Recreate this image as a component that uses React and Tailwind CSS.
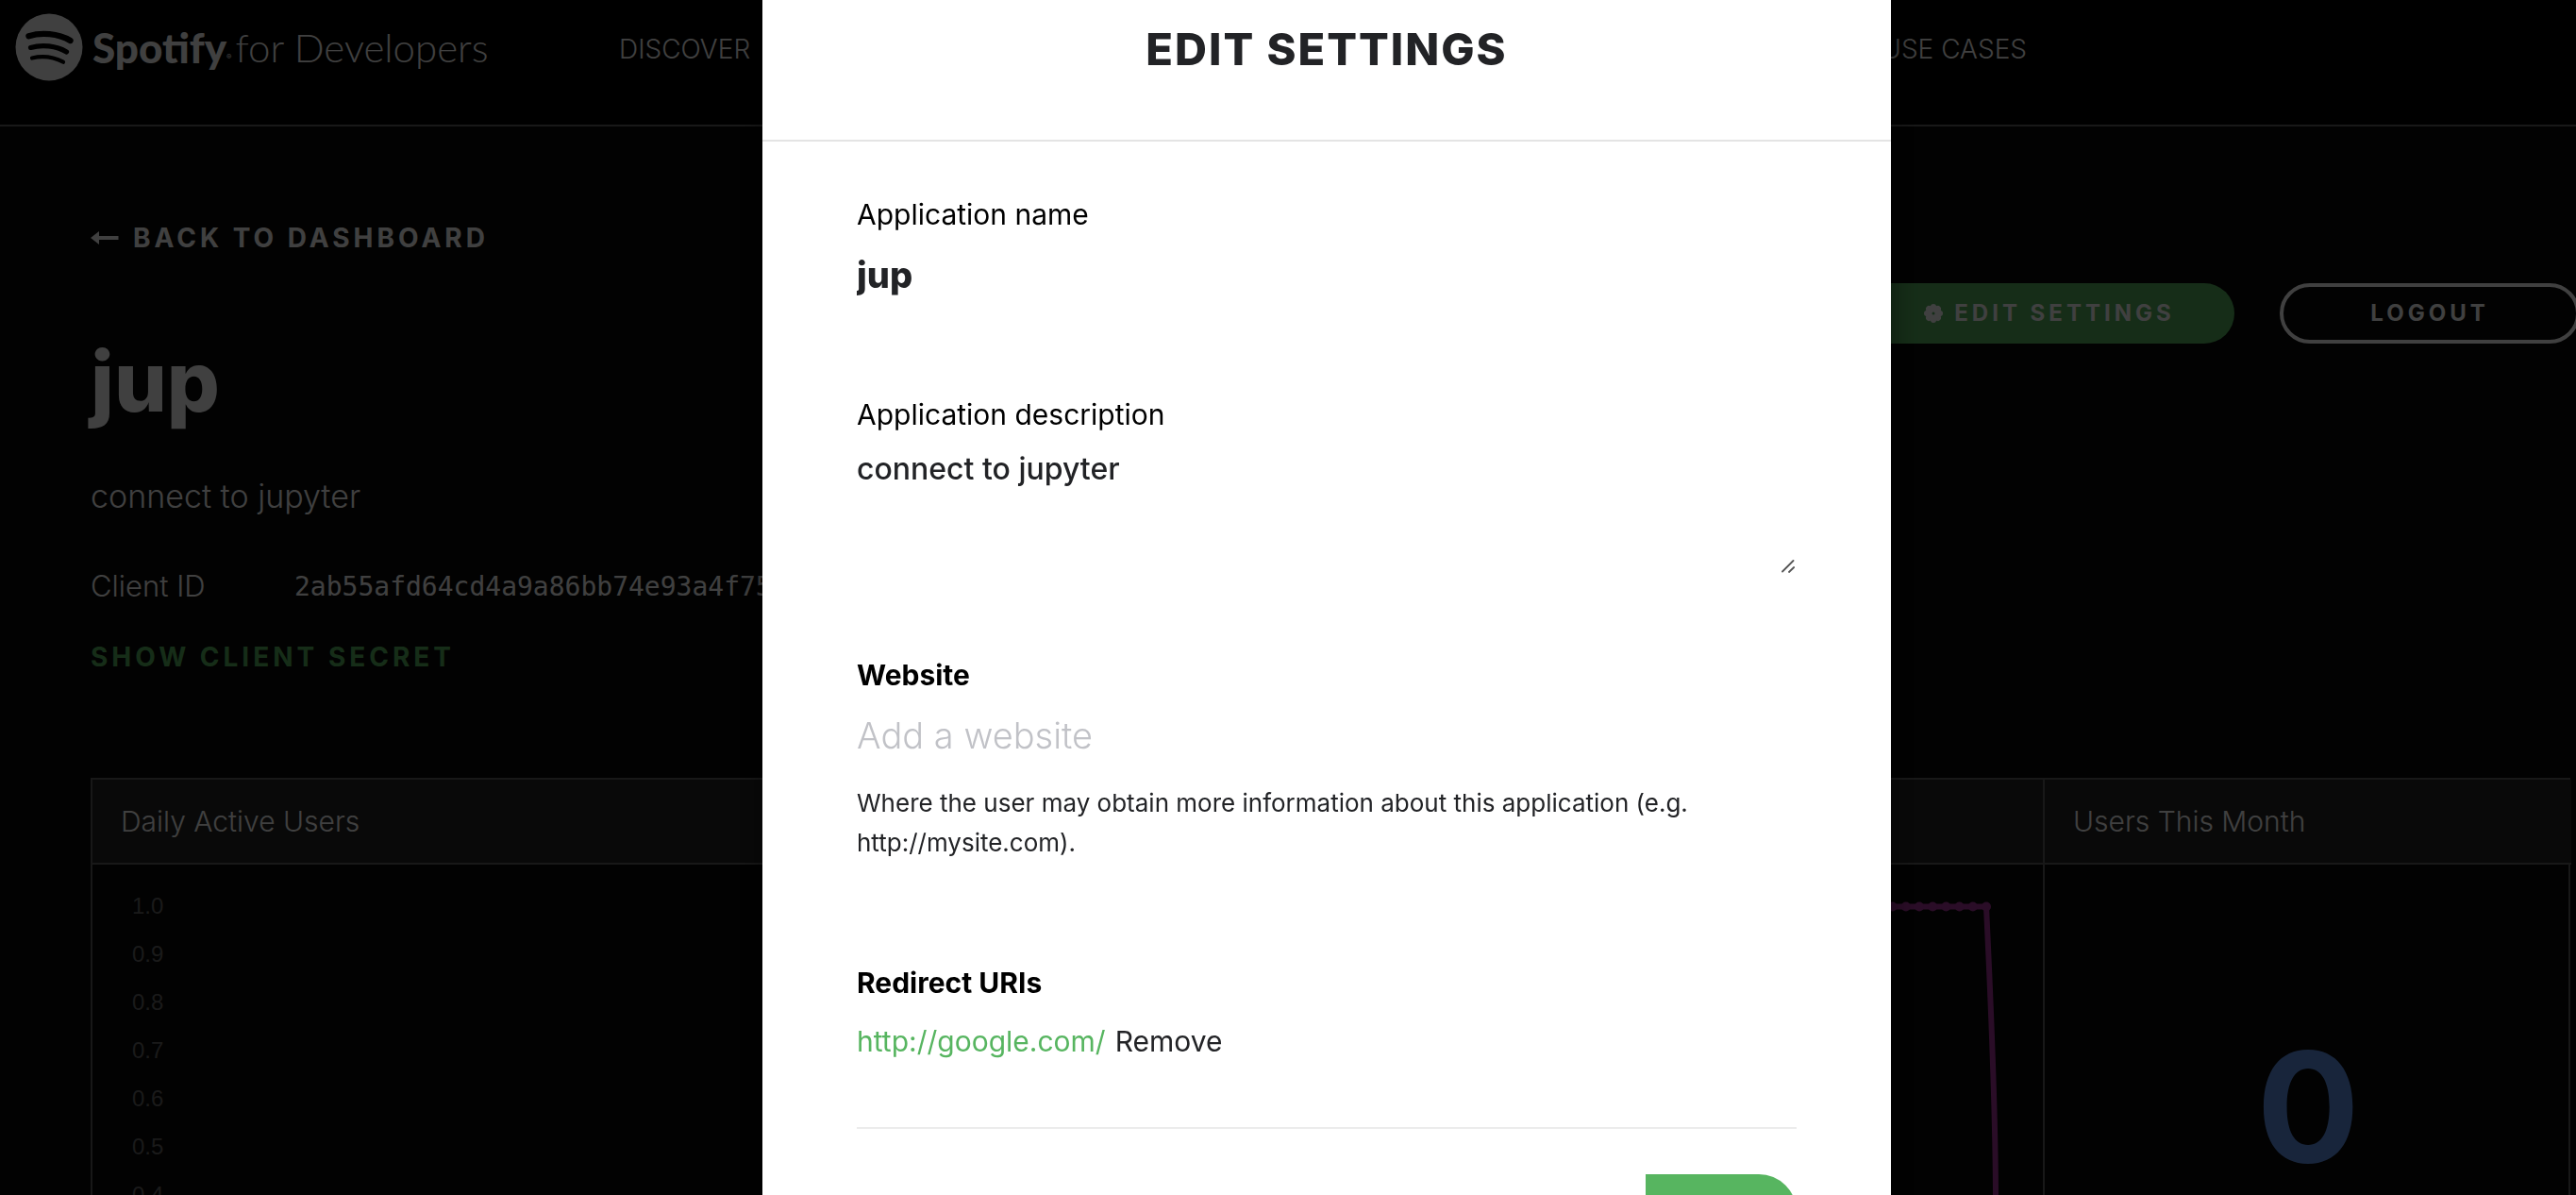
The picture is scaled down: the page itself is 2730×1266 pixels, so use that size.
import React from "react";

const ticks = ["1.0", "0.9", "0.8", "0.7", "0.6", "0.5", "0.4"];

const LAST_POINT_X = 1911;
const POINT_GAP = 14.2;
const points = Array.from({ length: 24 }, (_, i) => LAST_POINT_X - i * POINT_GAP);

function SpotifyMark() {
  return (
    <svg viewBox="0 0 72 72" className="size-[72px] shrink-0" aria-hidden="true">
      <circle cx="36" cy="36" r="35.5" fill="#fff" />
      <g fill="none" stroke="#000" strokeLinecap="round">
        <path d="M14.5 24.2c13-4 31-3 44 4.800" strokeWidth="6.400" />
        <path d="M16.500 36.400c12-3.500 27-2 38 4.600" strokeWidth="5.200" />
        <path d="M18 47.500c11-2.500 22-1.500 33 4.200" strokeWidth="4.200" />
      </g>
    </svg>
  );
}

function ArrowLeft() {
  return (
    <svg viewBox="0 0 30 16" className="h-4 w-[30px]" fill="currentColor" aria-hidden="true">
      <path d="M0 8 9 1v5h20.500v4H9v5z" />
    </svg>
  );
}

function GearIcon() {
  const petals = [0, 45, 90, 135, 180, 225, 270, 315];
  return (
    <svg viewBox="0 0 20 20" className="size-5" fill="currentColor" aria-hidden="true">
      <path
        fillRule="evenodd"
        d="M10 1.500a8.500 8.500 0 1 1 0 17a8.500 8.500 0 0 1 0-17zM10 8.500a1.500 1.500 0 1 0 0 3a1.500 1.500 0 0 0 0-3z"
      />
      {petals.map((a) => (
        <circle key={a} cx="10" cy="3" r="3" transform={`rotate(${a} 10 10)`} />
      ))}
    </svg>
  );
}

function TopBar() {
  return (
    <header className="border-b-2 border-[#606060] bg-black pb-8">
      <div className="flex h-[100px] items-center pl-4">
        <a href="#home" className="flex items-center">
          <SpotifyMark />
          <span className="ml-2.5 font-['Lato'] text-[44px] leading-[52px] font-black">Spotify</span>
          <span className="mt-5 text-[8px]">®</span>
          <span className="ml-1 font-['Lato'] text-[42px] leading-[52px] font-light">for Developers</span>
        </a>
        <nav className="mt-1 mr-[582px] ml-auto flex w-[1492px] justify-between text-[28px] leading-10 font-light">
          <a href="#discover">DISCOVER</a>
          <a href="#use-cases">USE CASES</a>
        </nav>
      </div>
    </header>
  );
}

function DailyUsersChart() {
  return (
    <div className="flex pt-[18px] pl-[42px]">
      <ul className="w-[54px] font-['Liberation_Sans'] text-2xl text-[#686868]">
        {ticks.map((t) => (
          <li key={t} className="leading-[51px]">{t}</li>
        ))}
      </ul>
      <svg viewBox="0 0 1971 340" preserveAspectRatio="xMaxYMin meet" className="h-[340px] flex-1 overflow-visible" aria-hidden="true">
        <g fill="none" stroke="#a8349c" strokeWidth="6" strokeLinejoin="round">
          <path d={`M${points[points.length - 1]} 26.500H${LAST_POINT_X}C1916 130 1921 250 1921 340`} />
        </g>
        <g fill="#a8349c">
          {points.map((x) => (
            <circle key={x} cx={x} cy="26.500" r="5" />
          ))}
        </g>
      </svg>
    </div>
  );
}

function Dashboard() {
  return (
    <main className="pt-[98px] pl-24">
      <div className="flex items-start justify-between">
        <div>
          <a href="#dashboard" className="flex items-center gap-[15px] text-[28px] leading-10 font-bold tracking-[4px]">
            <ArrowLeft />
            BACK TO DASHBOARD
          </a>
          <h1 className="mt-[84px] text-[88px] leading-[96px] font-extrabold">jup</h1>
          <p className="mt-[50px] text-[34px] leading-[48px] font-light">connect to jupyter</p>
          <dl className="mt-[47px] flex text-[30px] leading-[48px]">
            <dt className="w-[216px] text-[31px] font-light">Client ID</dt>
            <dd className="pt-px font-['DejaVu_Sans_Mono'] text-[28px]">2ab55afd64cd4a9a86bb74e93a4f75</dd>
          </dl>
          <button className="mt-[30px] block text-[28px] leading-10 font-bold tracking-[4px] text-[#57b560]">
            SHOW CLIENT SECRET
          </button>
        </div>
        <div className="mt-[68px] -mr-1 flex shrink-0 gap-12 text-2xl font-bold tracking-[4px]">
          <button className="flex h-16 w-[396px] items-center justify-center gap-3 rounded-full bg-[#57b560] pl-1">
            <GearIcon />
            EDIT SETTINGS
          </button>
          <button className="h-16 w-[318px] rounded-full border-4 border-white">LOGOUT</button>
        </div>
      </div>

      <div className="mt-[108px] mr-1.5 grid grid-cols-[1fr_558px] divide-x-2 divide-[#606060] border-2 border-[#606060]">
        <section>
          <h2 className="border-b-2 border-[#606060] bg-[#242424] px-[30px] py-[22px] text-[30px] leading-[44px] font-light">
            Daily Active Users
          </h2>
          <DailyUsersChart />
        </section>
        <section>
          <h2 className="border-b-2 border-[#606060] bg-[#242424] px-[30px] py-[22px] text-[30px] leading-[44px] font-light">
            Users This Month
          </h2>
          <p className="pt-44 text-center text-[162px] leading-[160px] font-bold text-[#6094ec]">0</p>
        </section>
      </div>
    </main>
  );
}

function SettingsDialog() {
  return (
    <div className="fixed inset-0 flex items-start justify-center overflow-hidden bg-black/75 pl-[82px]">
      <div
        role="dialog"
        aria-labelledby="dialog-title"
        className="w-[1196px] bg-white text-[#222326] shadow-[0_0_30px_rgba(0,0,0,0.5)]"
      >
        <h2
          id="dialog-title"
          className="border-b-2 border-[#e4e4e4] pt-5 pb-16 text-center text-[47px] leading-[64px] font-extrabold tracking-[2px]"
        >
          EDIT SETTINGS
        </h2>
        <form className="px-[100px] pt-[57px]">
          <label htmlFor="app-name" className="block text-[30px] leading-10 text-black">
            Application name
          </label>
          <input
            id="app-name"
            defaultValue="jup"
            className="mt-4 block h-14 w-full text-[38px] leading-[56px] font-extrabold outline-none"
          />

          <label htmlFor="app-description" className="mt-[100px] block text-[30px] leading-10 text-black">
            Application description
          </label>
          <div className="relative mt-[18px]">
            <textarea
              id="app-description"
              defaultValue="connect to jupyter"
              className="block h-[130px] w-full resize-none text-[32px] leading-10 font-medium outline-none"
            />
            <svg viewBox="0 0 14 14" className="absolute right-0.5 bottom-0 size-3.5" stroke="#555" strokeWidth="1.800" strokeLinecap="round" aria-hidden="true">
              <path d="M1 12.500 12.500 1M8 13l5.200-5" />
            </svg>
          </div>

          <label htmlFor="website" className="mt-[88px] block text-[30px] leading-10 font-bold text-black">
            Website
          </label>
          <input
            id="website"
            placeholder="Add a website"
            className="mt-4 block h-14 w-full text-[38px] leading-[56px] font-light outline-none placeholder:text-[#c1c2c7]"
          />
          <p className="mt-[23px] text-[26px] leading-[42px]">
            Where the user may obtain more information about this application (e.g. http://mysite.com).
          </p>

          <h3 className="mt-[107px] text-[30px] leading-10 font-bold text-black">Redirect URIs</h3>
          <div className="mt-[22px] flex gap-2.5 text-[30px] leading-10">
            <a href="http://google.com/" className="text-[#57b560]">http://google.com/</a>
            <button type="button">Remove</button>
          </div>

          <div className="mt-[71px] flex justify-end border-t-2 border-[#ececec] pt-12">
            <button type="submit" aria-label="Save" className="h-20 w-40 rounded-r-full bg-[#57b560]" />
          </div>
        </form>
      </div>
    </div>
  );
}

export default function App() {
  return (
    <div className="h-screen overflow-hidden bg-[#080808] font-['Inter',sans-serif] text-white">
      <TopBar />
      <Dashboard />
      <SettingsDialog />
    </div>
  );
}
